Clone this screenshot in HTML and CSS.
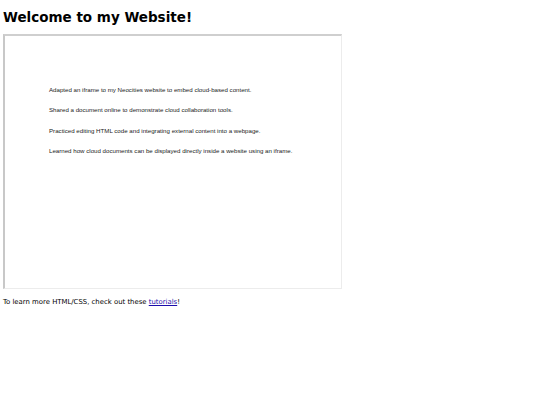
FILE: index.html
```html
<!DOCTYPE html>
<html>
<head>
<meta charset="utf-8">
<title>My Website</title>
<link rel="stylesheet" href="styles.css">
</head>
<body>
<h1 class="title">Welcome to my Website!</h1>
<div class="frame">
  <div class="doc">
    <p>Adapted an iframe to my Neocities website to embed cloud-based content.</p>
    <p>Shared a document online to demonstrate cloud collaboration tools.</p>
    <p>Practiced editing HTML code and integrating external content into a webpage.</p>
    <p>Learned how cloud documents can be displayed directly inside a website using an iframe.</p>
  </div>
</div>
<p class="note">To learn more HTML/CSS, check out these <a href="#">tutorials</a>!</p>
</body>
</html>
```
FILE: styles.css
```css
html, body {
  background: #fff;
  color: #000;
}
body {
  margin: 0;
  padding: 0 3px;
  font-family: "DejaVu Sans", Verdana, sans-serif;
}
.title {
  margin: 0;
  padding-top: 9px;
  font-size: 13.5px;
  line-height: 17px;
  font-weight: bold;
}
.frame {
  margin-top: 8px;
  width: 336px;
  height: 252px;
  border-style: solid;
  border-width: 2px 1px 1px 2px;
  border-color: #cfcfcf #ececec #ececec #c8c8c8;
  overflow: hidden;
}
.doc {
  padding: 50px 0 0 44px;
  font-family: "Liberation Sans", Arial, sans-serif;
  font-size: 6.15px;
  color: #222;
}
.doc p {
  margin: 0 0 12.8px;
  line-height: 7.5px;
}
.note {
  margin: 8px 0 0;
  font-size: 6.9px;
  line-height: 10px;
}
.note a {
  color: #1a0dab;
}
```
